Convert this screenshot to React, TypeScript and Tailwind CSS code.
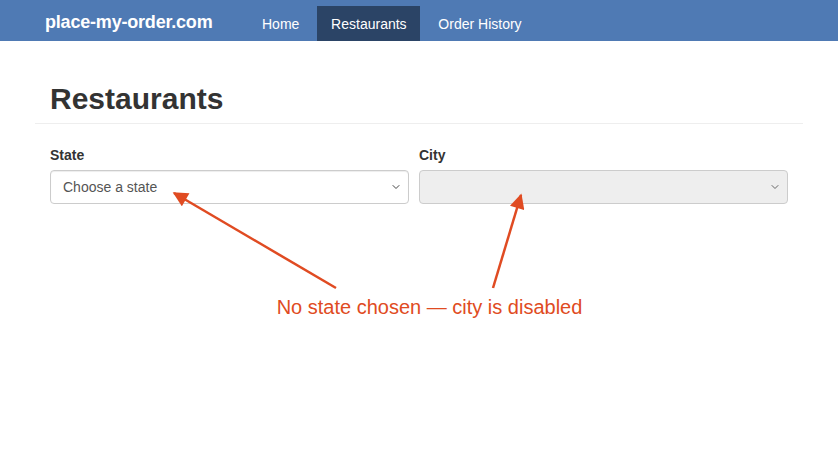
import { ChevronDown } from 'lucide-react'

const font = { fontFamily: '"Liberation Sans", Arial, sans-serif' }

export default function App() {
  return (
    <div className="relative w-[838px] h-[452px] bg-white text-[#333] font-['Liberation_Sans',Arial,sans-serif]">
      {/* Navbar */}
      <nav className="h-[41px] bg-[#4f7ab4] flex items-end">
        <div className="pl-[45px] w-[262px] self-stretch flex items-center pt-[3px] text-white text-[18px] font-bold tracking-[-0.2px]">
          place-my-order.com
        </div>
        <div className="flex items-end h-[35px] text-white text-[14px]">
          <a className="mr-[18px] h-full flex items-center pt-[1px]">Home</a>
          <a className="w-[103px] justify-center h-full flex items-center pt-[1px] bg-[#2b4466]">Restaurants</a>
          <a className="ml-[18px] h-full flex items-center pt-[1px]">Order History</a>
        </div>
      </nav>

      {/* Page */}
      <div className="ml-[35px] w-[768px]">
        <h1 className="pl-[15px] pt-[40px] text-[30px] leading-[36px] font-semibold text-[#333]">Restaurants</h1>
        <div className="mt-[6px] border-t border-[#eee]" />
        <div className="px-[15px] pt-[22px] flex gap-[10px]">
          <div className="w-[359px]">
            <label className="block text-[14px] leading-[18px] font-bold mb-[6px]">State</label>
            <div className="h-[34px] rounded-[4px] border border-[#ccc] bg-white flex items-center justify-between pl-[12px] pr-[6px] text-[14px] text-[#555] shadow-[inset_0_1px_1px_rgba(0,0,0,0.075)]">
              <span>Choose a state</span>
              <ChevronDown size={12} strokeWidth={2} className="text-[#444]" />
            </div>
          </div>
          <div className="w-[369px]">
            <label className="block text-[14px] leading-[18px] font-bold mb-[6px]">City</label>
            <div className="h-[34px] rounded-[4px] border border-[#ccc] bg-[#eee] flex items-center justify-end pr-[6px]">
              <ChevronDown size={12} strokeWidth={2} className="text-[#666]" />
            </div>
          </div>
        </div>
      </div>

      {/* Annotation overlay */}
      <svg className="absolute left-0 top-0 pointer-events-none" width="838" height="452">
        <defs>
          <marker id="ah" viewBox="0 0 10 10" refX="9" refY="5" markerWidth="6.5" markerHeight="6" orient="auto-start-reverse">
            <path d="M0,0 L10,5 L0,10 z" fill="#e04b22" />
          </marker>
        </defs>
        <line x1="336" y1="288" x2="174" y2="193" stroke="#e04b22" strokeWidth="2.5" markerEnd="url(#ah)" />
        <line x1="493" y1="288" x2="521" y2="195" stroke="#e04b22" strokeWidth="2.5" markerEnd="url(#ah)" />
      </svg>
      <div
        style={font}
        className="absolute left-0 top-[294px] w-[859px] text-center text-[20px] leading-[26px] text-[#e04b22]"
      >
        No state chosen — city is disabled
      </div>
    </div>
  )
}
